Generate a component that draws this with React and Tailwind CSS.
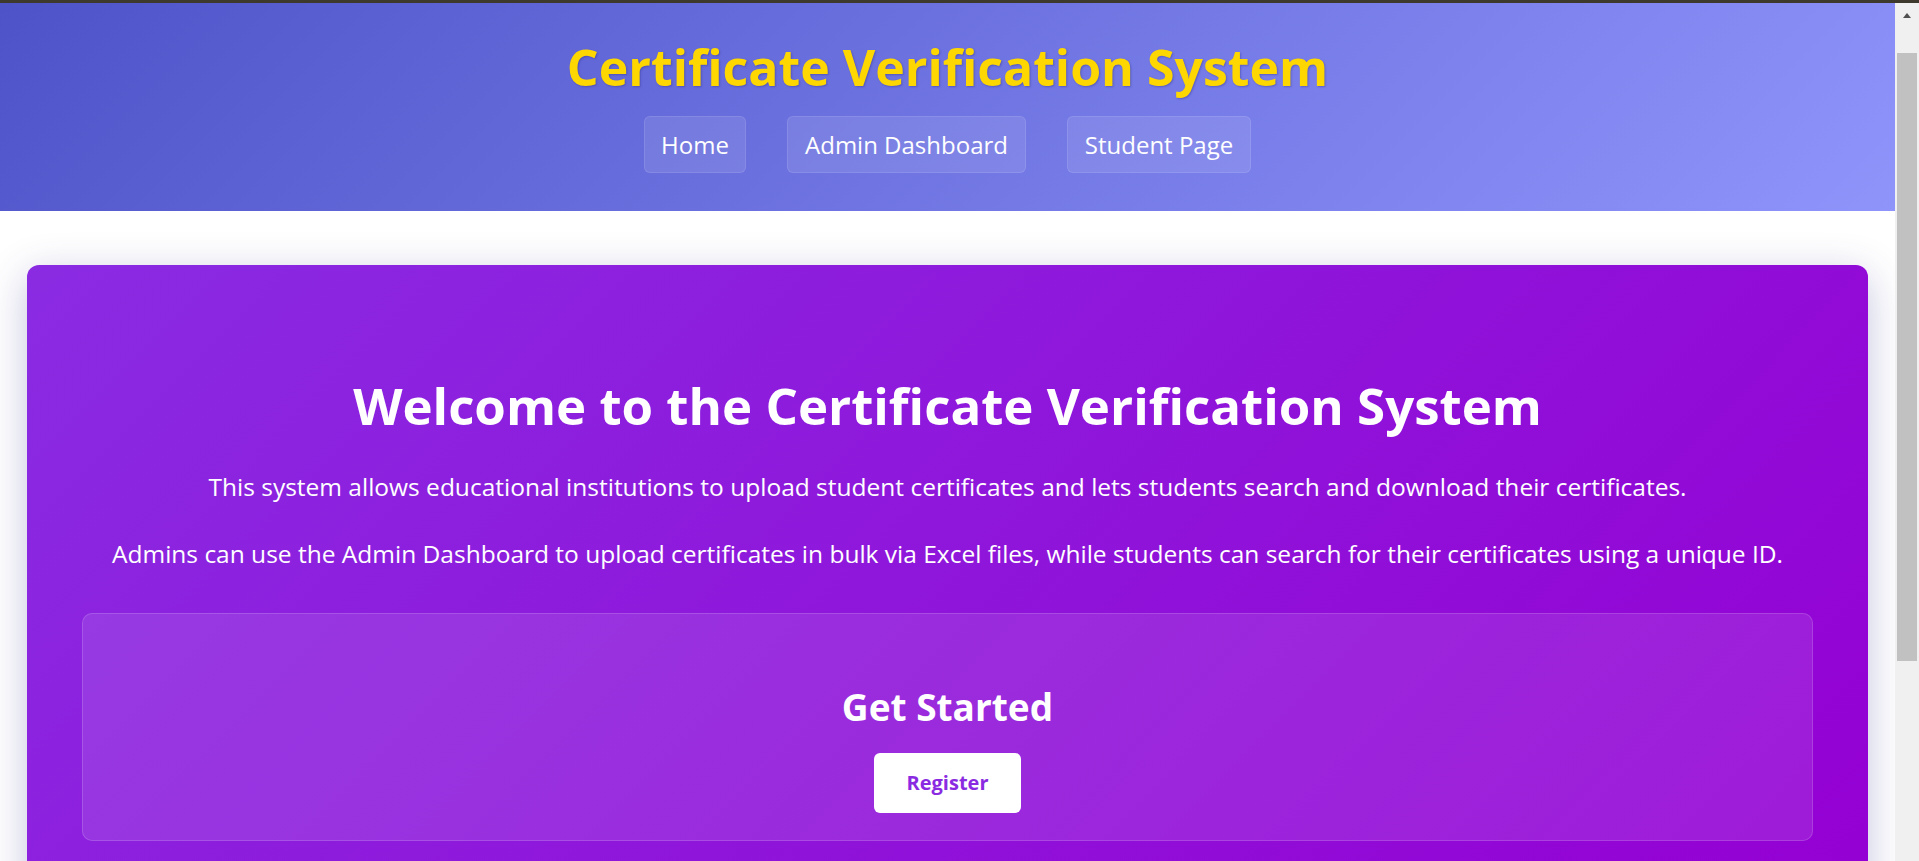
export default function App() {
  const navItems = [
    { label: 'Home', width: 'w-[102px]' },
    { label: 'Admin Dashboard', width: 'w-[239px]' },
    { label: 'Student Page', width: 'w-[184px]' },
  ];

  return (
    <div className="flex h-[861px] flex-col overflow-hidden bg-white font-['Open_Sans',sans-serif]">
      {/* window top edge */}
      <div className="h-[3px] shrink-0 bg-[#3d3a2d]" />

      <div className="flex min-h-0 flex-1">
        <div className="min-w-0 flex-1 overflow-hidden">
          <header className="bg-[linear-gradient(135deg,#4e54c8,#8f94fb)] pt-[32px] pb-[38px] text-center">
            <h1 className="text-[50px] font-bold leading-[64px] text-[#ffd700] [text-shadow:1px_1px_2px_rgba(40,40,120,0.35)]">
              Certificate Verification System
            </h1>
            <nav className="mt-[17px] flex justify-center gap-[41px]">
              {navItems.map((item) => (
                <a
                  key={item.label}
                  href="#"
                  className={`${item.width} flex h-[57px] items-center justify-center rounded-md border border-white/10 bg-white/10 text-[24px] text-white`}
                >
                  {item.label}
                </a>
              ))}
            </nav>
          </header>

          <main className="px-[27px] pt-[54px]">
            <section className="rounded-xl bg-[linear-gradient(135deg,#8a2be2,#9400d3)] px-[55px] pt-[108px] pb-[60px] text-center text-white shadow-[0_10px_40px_rgba(60,60,150,0.3)]">
              <h2 className="text-[51px] font-bold leading-[64px]">
                Welcome to the Certificate Verification System
              </h2>
              <p className="mt-[35px] text-[24.5px] leading-[30px]">
                This system allows educational institutions to upload student certificates and lets students search and download their certificates.
              </p>
              <p className="mt-[37px] text-[24.5px] leading-[30px]">
                Admins can use the Admin Dashboard to upload certificates in bulk via Excel files, while students can search for their certificates using a unique ID.
              </p>

              <div className="mt-[44px] rounded-[10px] border border-white/15 bg-white/10 pt-[73px] pb-[27px]">
                <h3 className="text-[37px] font-bold leading-[40px]">Get Started</h3>
                <button className="mt-[26px] h-[60px] w-[147px] rounded-md bg-white text-[20px] font-bold text-[#8a2be2]">
                  Register
                </button>
              </div>
            </section>
          </main>
        </div>

        {/* scrollbar */}
        <div className="flex w-[24px] shrink-0 flex-col bg-[#f0f0f0]">
          <div className="flex h-[50px] items-start justify-center pt-[10px]">
            <svg width="8" height="5" viewBox="0 0 8 5">
              <path d="M4 0 L8 5 L0 5 Z" fill="#505050" />
            </svg>
          </div>
          <div className="mx-[2px] h-[608px] bg-[#c1c1c1]" />
        </div>
      </div>
    </div>
  );
}
